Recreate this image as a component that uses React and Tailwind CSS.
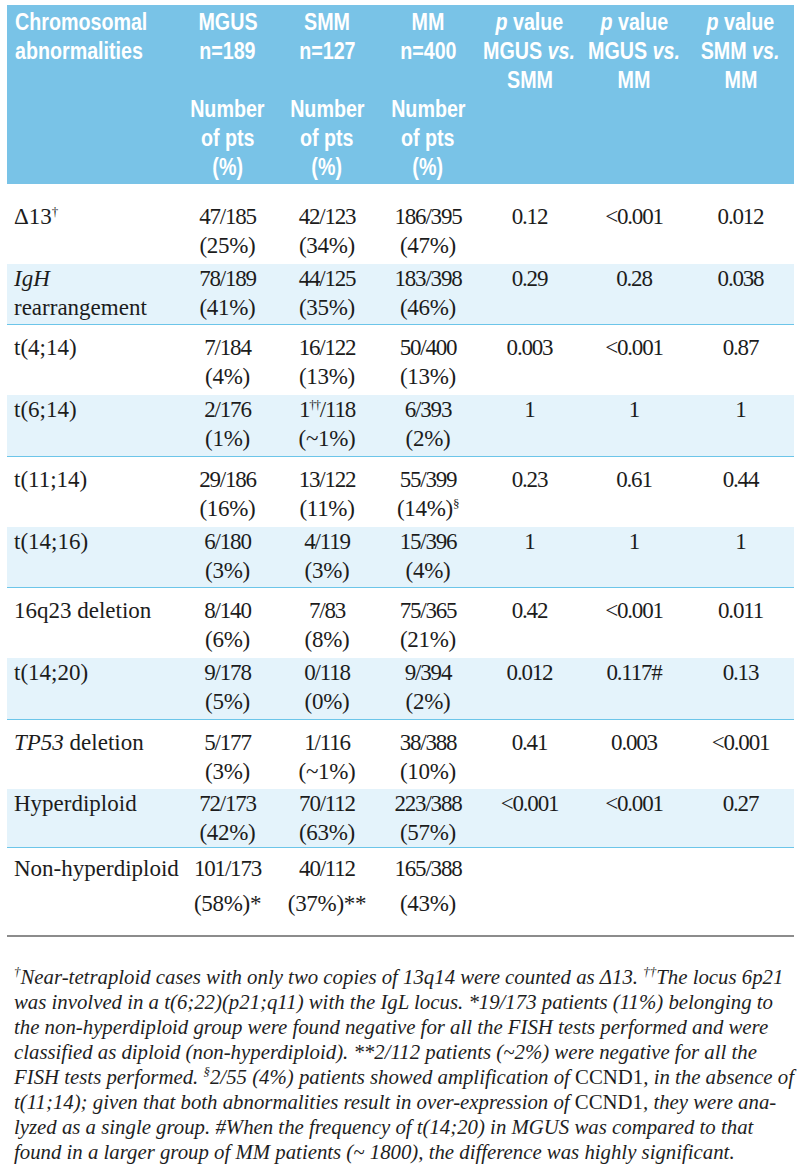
import React from "react";

const HF = { fontFamily: '"Liberation Sans", Arial, sans-serif' };
const SF = { fontFamily: '"Liberation Serif", "Times New Roman", serif' };

const GRID = "grid grid-cols-[172px_97px_102px_100px_103px_106px_107px]";

const Sup = ({ children }) => <sup className="text-[13px] top-[-0.6em]">{children}</sup>;

const rows = [
  {
    label: <>Δ13<Sup>†</Sup></>,
    c: [["47/185", "(25%)"], ["42/123", "(34%)"], ["186/395", "(47%)"], ["0.12"], ["<0.001"], ["0.012"]],
    cls: "pt-[18px] pb-[4px]",
  },
  {
    label: <><i>IgH</i><br />rearrangement</>,
    c: [["78/189", "(41%)"], ["44/125", "(35%)"], ["183/398", "(46%)"], ["0.29"], ["0.28"], ["0.038"]],
    cls: "bg-[#e4f3fb] border-b border-[#6cc5e9] pt-[0px] pb-[2px]",
  },
  {
    label: "t(4;14)",
    c: [["7/184", "(4%)"], ["16/122", "(13%)"], ["50/400", "(13%)"], ["0.003"], ["<0.001"], ["0.87"]],
    cls: "pt-[8px] pb-[4px]",
  },
  {
    label: "t(6;14)",
    c: [["2/176", "(1%)"], [<>1<Sup>††</Sup>/118</>, "(~1%)"], ["6/393", "(2%)"], ["1"], ["1"], ["1"]],
    cls: "bg-[#e4f3fb] border-b border-[#6cc5e9] pt-[0px] pb-[3px]",
  },
  {
    label: "t(11;14)",
    c: [["29/186", "(16%)"], ["13/122", "(11%)"], ["55/399", <>(14%)<Sup>§</Sup></>], ["0.23"], ["0.61"], ["0.44"]],
    cls: "pt-[8px] pb-[4px]",
  },
  {
    label: "t(14;16)",
    c: [["6/180", "(3%)"], ["4/119", "(3%)"], ["15/396", "(4%)"], ["1"], ["1"], ["1"]],
    cls: "bg-[#e4f3fb] border-b border-[#6cc5e9] pt-[0px] pb-[2px]",
  },
  {
    label: "16q23 deletion",
    c: [["8/140", "(6%)"], ["7/83", "(8%)"], ["75/365", "(21%)"], ["0.42"], ["<0.001"], ["0.011"]],
    cls: "pt-[8px] pb-[4px]",
  },
  {
    label: "t(14;20)",
    c: [["9/178", "(5%)"], ["0/118", "(0%)"], ["9/394", "(2%)"], ["0.012"], ["0.117#"], ["0.13"]],
    cls: "bg-[#e4f3fb] border-b border-[#6cc5e9] pt-[0px] pb-[3px]",
  },
  {
    label: <><i>TP53</i> deletion</>,
    c: [["5/177", "(3%)"], ["1/116", "(~1%)"], ["38/388", "(10%)"], ["0.41"], ["0.003"], ["<0.001"]],
    cls: "pt-[8px] pb-[3px]",
  },
  {
    label: "Hyperdiploid",
    c: [["72/173", "(42%)"], ["70/112", "(63%)"], ["223/388", "(57%)"], ["<0.001"], ["<0.001"], ["0.27"]],
    cls: "bg-[#e4f3fb] border-b border-[#6cc5e9] pt-[0px] pb-[0px]",
  },
  {
    label: "Non-hyperdiploid",
    c: [["101/173", "(58%)*"], ["40/112", "(37%)**"], ["165/388", "(43%)"], [], [], []],
    cls: "pt-[3px] pb-[14px] leading-[35px]",
  },
];

const HL = ({ children, left }) => (
  <span
    className={
      left
        ? "inline-block whitespace-nowrap scale-x-[0.82] origin-left"
        : "inline-block whitespace-nowrap scale-x-[0.82] origin-center"
    }
  >
    {children}
  </span>
);

function HeaderCol({ top, bottom }) {
  return (
    <div className="flex flex-col items-center text-center">
      <div className="h-[87px] flex flex-col items-center">
        {top.map((t, i) => (
          <HL key={i}>{t}</HL>
        ))}
      </div>
      <div className="flex flex-col items-center">
        {bottom.map((t, i) => (
          <HL key={i}>{t}</HL>
        ))}
      </div>
    </div>
  );
}

const numBottom = ["Number", "of pts", "(%)"];

export default function App() {
  return (
    <div className="w-[801px] min-h-[1170px] bg-white pt-[5px]">
      <div className="ml-[7px] w-[787px]">
        {/* Header */}
        <div
          className={`${GRID} bg-[#79c3e7] text-white font-bold text-[24px] leading-[29px] pt-[2px] pb-[3px]`}
          style={HF}
        >
          <div className="pl-[8px] flex flex-col items-start">
            <HL left>Chromosomal</HL>
            <HL left>abnormalities</HL>
          </div>
          <HeaderCol top={["MGUS", "n=189"]} bottom={numBottom} />
          <HeaderCol top={["SMM", "n=127"]} bottom={numBottom} />
          <HeaderCol top={["MM", "n=400"]} bottom={numBottom} />
          <HeaderCol top={[<><i>p</i> value</>, <>MGUS <i>vs.</i></>, "SMM"]} bottom={[]} />
          <HeaderCol top={[<><i>p</i> value</>, <>MGUS <i>vs.</i></>, "MM"]} bottom={[]} />
          <HeaderCol top={[<><i>p</i> value</>, <>SMM <i>vs.</i></>, "MM"]} bottom={[]} />
        </div>

        {/* Body */}
        <div className="text-[23px] leading-[29px] text-[#1c1c1c]" style={SF}>
          {rows.map((r, i) => (
            <div key={i} className={`${GRID} ${r.cls}`}>
              <div className="pl-[7px] whitespace-nowrap">{r.label}</div>
              {r.c.map((cell, j) => (
                <div key={j} className="text-center whitespace-nowrap">
                  {cell.map((l, k) => (
                    <div key={k} className={k === 0 ? "tracking-[-1.2px]" : "tracking-[-0.3px]"}>
                      {l}
                    </div>
                  ))}
                </div>
              ))}
            </div>
          ))}
          <div className="h-[2px] bg-[#8c8c8c]" />
        </div>

        {/* Footnote */}
        <div
          className="mt-[27px] pl-[7px] italic text-[20.8px] leading-[25px] text-[#1e1e1e] whitespace-nowrap"
          style={SF}
        >
          <div><Sup>†</Sup>Near-tetraploid cases with only two copies of 13q14 were counted as Δ13. <Sup>††</Sup>The locus 6p21</div>
          <div>was involved in a t(6;22)(p21;q11) with the IgL locus. *19/173 patients (11%) belonging to</div>
          <div>the non-hyperdiploid group were found negative for all the FISH tests performed and were</div>
          <div>classified as diploid (non-hyperdiploid). **2/112 patients (~2%) were negative for all the</div>
          <div>FISH tests performed. <Sup>§</Sup>2/55 (4%) patients showed amplification of <span className="not-italic">CCND1</span>, in the absence of</div>
          <div>t(11;14); given that both abnormalities result in over-expression of <span className="not-italic">CCND1</span>, they were ana-</div>
          <div>lyzed as a single group. #When the frequency of t(14;20) in MGUS was compared to that</div>
          <div>found in a larger group of MM patients (~ 1800), the difference was highly significant.</div>
        </div>
      </div>
    </div>
  );
}
